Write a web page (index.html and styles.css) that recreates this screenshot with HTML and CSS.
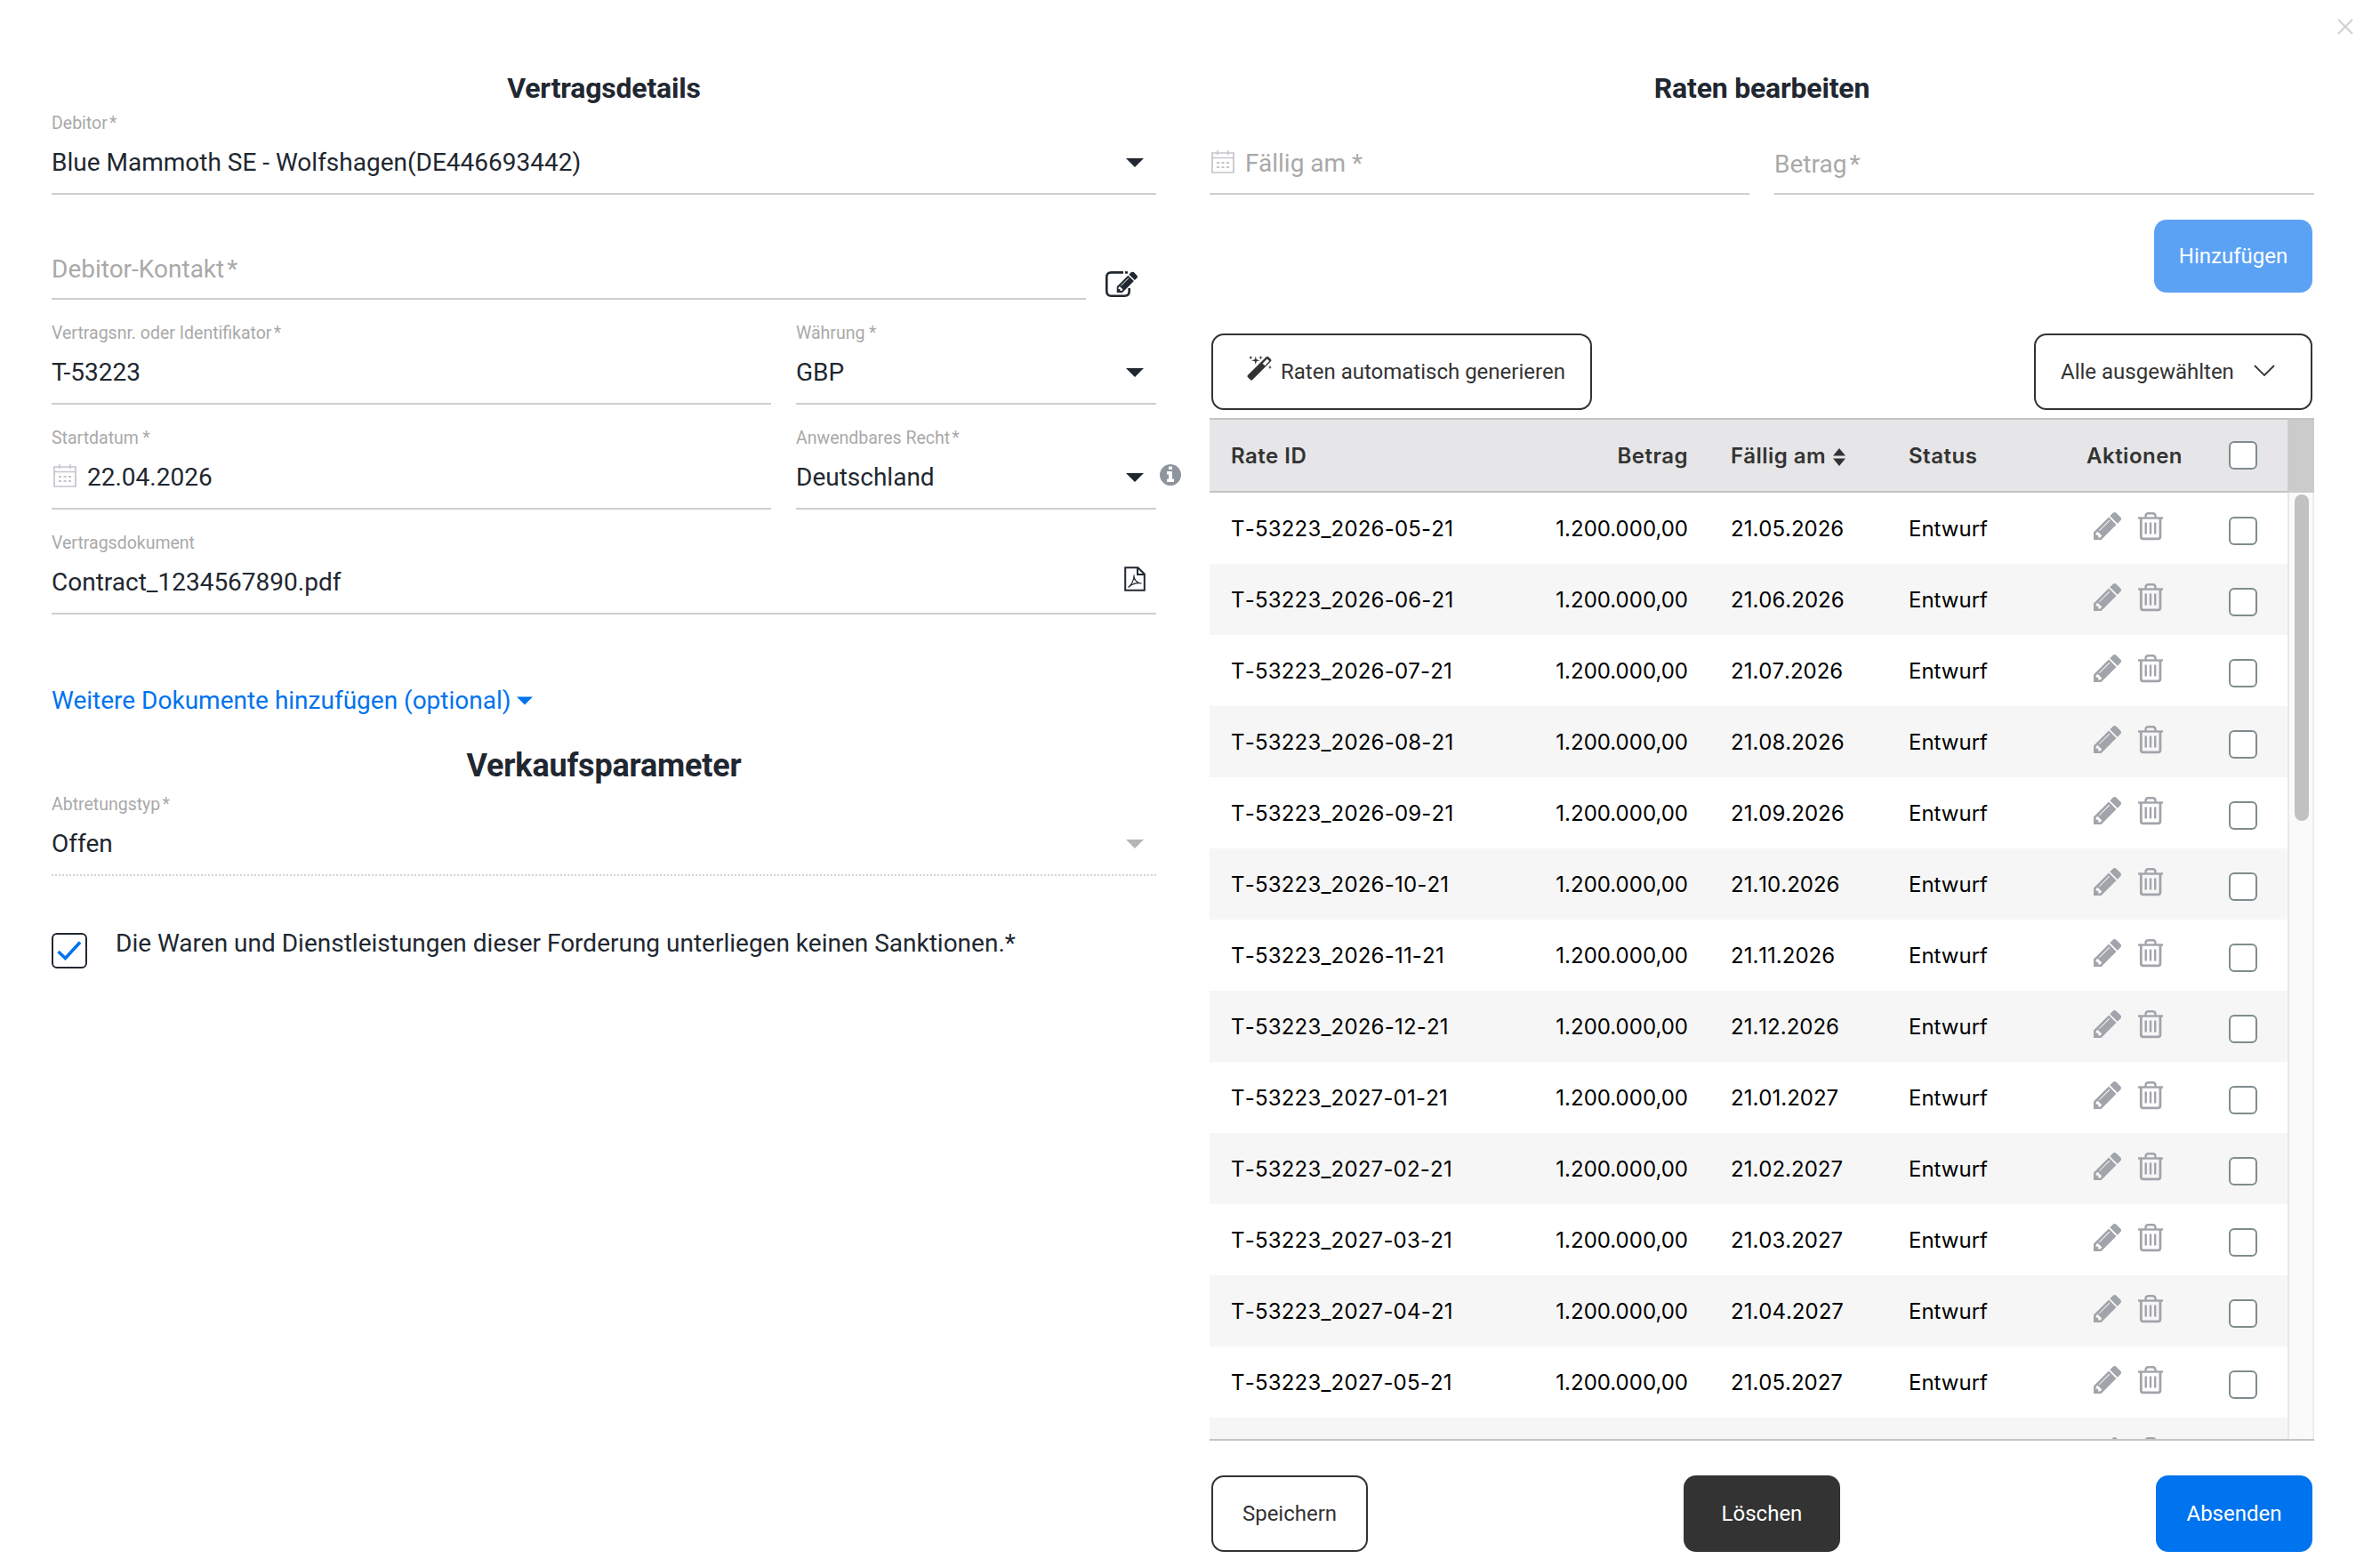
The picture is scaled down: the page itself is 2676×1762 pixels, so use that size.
FILE: index.html
```html
<!DOCTYPE html>
<html lang="de">
<head>
    <meta charset="UTF-8">
    <meta name="viewport" content="width=device-width, initial-scale=1.0">
    <title>Vertragsdetails</title>
    <link rel="stylesheet" href="styles.css">
</head>
<body>

    <!-- Shared icons -->
    <svg class="sprite" width="0" height="0">
        <symbol id="pencil" viewBox="128 149 1515 1515">
            <path d="M491 1536l91-91-235-235-91 91v107h128v128h107zM1014 608q0-22-22-22-10 0-17 7l-542 542q-7 7-7 17 0 22 22 22 10 0 17-7l542-542q7-7 7-17zM960 416l416 416-832 832h-416v-416zM1643 512q0 53-37 90l-166 166-416-416 166-165q36-38 90-38 53 0 91 38l235 234q37 39 37 91z" fill="currentColor"/>
        </symbol>
        <symbol id="trash" viewBox="0 0 28 32">
            <g fill="none" stroke="currentColor">
                <path d="M0 6.5h28" stroke-width="2.4"/>
                <path d="M8.5 6V4.5Q8.5 1.2 11.5 1.2H16.5Q19.5 1.2 19.5 4.5V6" stroke-width="2.4"/>
                <path d="M3.3 7V27.5Q3.3 29.8 5.600 29.8H22.6Q24.9 29.8 24.9 27.5V7" stroke-width="2.8"/>
                <path d="M8.7 11.5v13M14 11.5v13M19.2 11.5v13" stroke-width="2.4"/>
            </g>
        </symbol>
        <symbol id="calendar" viewBox="0 0 26 26">
            <g fill="none" stroke="currentColor">
                <path d="M1 3h24v22H1z M1 8.5h24" stroke-width="1.7"/>
                <path d="M7 0v5M19 0v5" stroke-width="1.5"/>
                <path d="M6 14h14M6 19h14" stroke-width="2" stroke-dasharray="3 2.5"/>
            </g>
        </symbol>
        <symbol id="caret" viewBox="0 0 20 10">
            <path d="M0 0h20L10 10z" fill="currentColor"/>
        </symbol>
    </svg>

    <svg class="close" viewBox="0 0 18 18"><path d="M1 1l16 16M17 1L1 17" fill="none" stroke="currentColor" stroke-width="2"/></svg>

    <div class="layout">
        <section class="column">
            <h2>Vertragsdetails</h2>

            <div class="row first">
                <div class="field">
                    <label>Debitor<i>*</i></label>
                    <div class="value"><span>Blue Mammoth SE - Wolfshagen(DE446693442)</span><svg class="caret"><use href="#caret"/></svg></div>
                </div>
            </div>

            <div class="row">
                <div class="field contact">
                    <div class="value placeholder"><span>Debitor-Kontakt<i>*</i></span></div>
                </div>
                <svg class="edit" viewBox="0 0 36 30">
                    <path d="M25 1.4H6.5Q1.3 1.4 1.3 6.600V22.5Q1.3 27.7 6.5 27.7H21.5Q26.7 27.7 26.7 22.5V19" fill="none" stroke="currentColor" stroke-width="2.6"/>
                    <path d="M20 -2L30 -2L20 12z" fill="white"/>
                    <path d="M22 1.4H25" stroke="currentColor" stroke-width="2.6"/>
                    <use href="#pencil" x="12.5" y="0.5" width="23.5" height="23.5"/>
                </svg>
            </div>

            <div class="row">
                <div class="field">
                    <label>Vertragsnr. oder Identifikator<i>*</i></label>
                    <div class="value"><span>T-53223</span></div>
                </div>
                <div class="field narrow">
                    <label>Währung<i class="wide">*</i></label>
                    <div class="value"><span>GBP</span><svg class="caret"><use href="#caret"/></svg></div>
                </div>
            </div>

            <div class="row">
                <div class="field">
                    <label>Startdatum<i class="wide">*</i></label>
                    <div class="value"><svg class="calendar"><use href="#calendar"/></svg><span>22.04.2026</span></div>
                </div>
                <div class="field narrow">
                    <label>Anwendbares Recht<i>*</i></label>
                    <div class="value"><span>Deutschland</span><svg class="caret"><use href="#caret"/></svg></div>
                </div>
                <svg class="info" viewBox="128 128 1536 1536"><path d="M1152 1376v-160q0-14-9-23t-23-9h-96v-512q0-14-9-23t-23-9h-320q-14 0-23 9t-9 23v160q0 14 9 23t23 9h96v320h-96q-14 0-23 9t-9 23v160q0 14 9 23t23 9h448q14 0 23-9t9-23zM1024 480v-160q0-14-9-23t-23-9h-192q-14 0-23 9t-9 23v160q0 14 9 23t23 9h192q14 0 23-9t9-23zM1664 896q0 209-103 385.5t-279.5 279.5-385.5 103-385.5-103-279.5-279.5-103-385.5 103-385.5 279.5-279.5 385.5-103 385.5 103 279.5 279.5 103 385.5z" fill="currentColor"/></svg>
            </div>

            <div class="row">
                <div class="field">
                    <label>Vertragsdokument</label>
                    <div class="value">
                        <span>Contract_1234567890.pdf</span>
                        <svg class="pdf" viewBox="0 0 24 28">
                            <path d="M1.2 1.2H15.5L22.8 8.5V26.8H1.2z M15 1.2V9H22.8" fill="none" stroke="currentColor" stroke-width="2"/>
                            <path d="M4.5 23.5C8 21 11.5 14.5 11 9.5C10.5 14 14 19 19.5 19C14 18 9 19.5 4.5 23.5z" fill="none" stroke="currentColor" stroke-width="1.2"/>
                        </svg>
                    </div>
                </div>
            </div>

            <a class="more" href="#">Weitere Dokumente hinzufügen (optional) <svg><use href="#caret"/></svg></a>

            <h2 class="sales">Verkaufsparameter</h2>
            <div class="field disabled">
                <label>Abtretungstyp<i>*</i></label>
                <div class="value"><span>Offen</span><svg class="caret"><use href="#caret"/></svg></div>
            </div>

            <div class="sanctions">
                <div class="checkbox checked"><svg viewBox="0 0 28 22"><path d="M1.5 12l8 7.5L26 1.5" fill="none" stroke="currentColor" stroke-width="3.6"/></svg></div>
                <span>Die Waren und Dienstleistungen dieser Forderung unterliegen keinen Sanktionen.*</span>
            </div>
        </section>

        <section class="column">
            <h2>Raten bearbeiten</h2>

            <div class="row first">
                <div class="field">
                    <div class="value placeholder due"><svg class="calendar"><use href="#calendar"/></svg><span>Fällig am *</span></div>
                </div>
                <div class="field">
                    <div class="value placeholder"><span>Betrag<i>*</i></span></div>
                </div>
            </div>

            <div class="button add">Hinzufügen</div>

            <div class="toolbar">
                <div class="button outline generate">
                    <svg viewBox="0 0 28 28">
                        <path d="M21.5 1.5Q23 0 24.5 1.5L27 4Q28 5.5 26.8 6.6L6 27.2Q5 28 4 27.2L.8 24Q0 23 .8 22zM22.8 3.6L17.6 8.7L20.3 11.2L25.2 6z" fill="currentColor" fill-rule="evenodd"/>
                        <path d="M9.8 .5L10.8 4.3L14.5 5.3L10.8 6.3L9.8 10L8.8 6.3L5 5.3L8.8 4.3zM4.3 0L4.9 1.5L6.5 2.1L4.9 2.7L4.3 4.2L3.7 2.7L2 2.1L3.7 1.5zM15.5 0L16.1 1.5L17.7 2.1L16.1 2.7L15.5 4.2L14.9 2.7L13.3 2.1L14.9 1.5zM26 10.8L26.6 12.4L28 13L26.6 13.6L26 15.2L25.4 13.6L23.9 13L25.4 12.4z" fill="currentColor"/>
                    </svg>
                    Raten automatisch generieren
                </div>
                <div class="button outline selected">
                    Alle ausgewählten
                    <svg viewBox="0 0 24 14"><path d="M1 1l11 11L23 1" fill="none" stroke="currentColor" stroke-width="1.8"/></svg>
                </div>
            </div>

            <div class="table">
                <div class="table-head">
                    <div class="cells">
                        <span>Rate ID</span>
                        <span class="right">Betrag</span>
                        <span>Fällig am<svg class="sort" viewBox="0 0 14 20"><path d="M7 0l7 8.5H0zM7 20l7-8.5H0z" fill="currentColor"/></svg></span>
                        <span>Status</span>
                        <span>Aktionen</span>
                        <span class="checkbox"></span>
                    </div>
                    <div class="corner"></div>
                </div>
                <div class="table-body">
                    <div class="rates" id="rates"></div>
                    <div class="scrollbar"><div class="thumb"></div></div>
                </div>
            </div>

            <div class="footer">
                <div class="button outline">Speichern</div>
                <div class="button dark">Löschen</div>
                <div class="button primary">Absenden</div>
            </div>
        </section>
    </div>

    <script>
        // One rate per month, starting in May 2026
        const renderRates = (count) => {
            const rates = document.getElementById('rates');

            for (let i = 0; i < count; i++) {
                const year = 2026 + Math.floor((i + 4) / 12);
                const month = String((i + 4) % 12 + 1).padStart(2, '0');
                const row = document.createElement('div');
                row.classList.add('cells', 'rate');

                row.innerHTML = `
                    <span class="rate-id">T-53223_${year}-${month}-21</span>
                    <span class="right">1.200.000,00</span>
                    <span class="date">21.${month}.${year}</span>
                    <span>Entwurf</span>
                    <span class="actions">
                        <svg class="pencil"><use href="#pencil"/></svg>
                        <svg class="trash"><use href="#trash"/></svg>
                    </span>
                    <span class="checkbox"></span>
                `;

                rates.appendChild(row);
            }
        };

        renderRates(14);
    </script>
</body>
</html>
```
FILE: styles.css
```css
* {
    box-sizing: border-box;
}

body {
    margin: 0;
    height: 1762px;
    overflow: hidden;
    background: white;
    color: #212730;
    font-family: Roboto, "Liberation Sans", sans-serif;
    font-size: 28px;
}

svg {
    display: block;
    flex: none;
}

i {
    font-style: normal;
    margin-left: 0.11em;
}

i.wide {
    margin-left: 0.23em;
}

.sprite {
    position: absolute;
}

.close {
    position: absolute;
    top: 21px;
    right: 30px;
    width: 18px;
    height: 18px;
    color: #cfcfcf;
}

/* Two equal columns */
.layout {
    display: flex;
    gap: 60px;
    padding: 80px 74px 0 58px;
}

.column {
    width: 1242px;
}

h2 {
    margin: 0;
    height: 45px;
    font-size: 32px;
    font-weight: 700;
    line-height: 39px;
    letter-spacing: -0.2px;
    text-align: center;
}

h2.sales {
    margin-top: 34px;
    height: 51px;
    font-size: 36px;
    line-height: 43px;
}

/* Form fields */
.row {
    display: flex;
    gap: 28px;
    margin-top: 24px;
}

.row.first {
    margin-top: 0;
}

.field {
    display: flex;
    flex: 1;
    flex-direction: column;
    justify-content: flex-end;
    height: 94px;
    border-bottom: 2px solid #cfcfcf;
}

.narrow {
    flex: none;
    width: 405px;
}

.contact {
    flex: none;
    width: 1163px;
}

.field label {
    margin-bottom: 12px;
    color: #a9a9a9;
    font-size: 19.5px;
    line-height: 24px;
}

.value {
    display: flex;
    align-items: center;
    height: 54px;
    padding-bottom: 14px;
    line-height: 40px;
}

.placeholder {
    padding-bottom: 11px;
    color: #a9a9a9;
}

.due {
    padding-bottom: 13px;
}

.caret {
    width: 20px;
    height: 10px;
    margin: 0 14px 1px auto;
}

.calendar {
    width: 26px;
    height: 26px;
    margin: 0 12px 4px 2px;
    color: #c3c5cb;
}

.edit {
    width: 36px;
    height: 30px;
    margin: 62px 0 0 -6px;
}

.info {
    width: 24px;
    height: 24px;
    margin: 43px -28px 0 -24px;
    color: #8e959d;
}

.pdf {
    width: 24px;
    height: 28px;
    margin: 0 12px 8px auto;
}

.disabled {
    border-bottom: 2px dotted #d4d4d4;
}

.disabled .caret {
    color: #b5b5b5;
}

.more {
    display: flex;
    align-items: center;
    gap: 6px;
    margin: 77px 0 -2px;
    color: #0073ee;
    line-height: 40px;
    text-decoration: none;
}

.more svg {
    width: 18px;
    height: 10px;
}

.sanctions {
    display: flex;
    gap: 32px;
    margin-top: 56px;
    line-height: 40px;
}

/* Checkboxes */
.checkbox {
    width: 32px;
    height: 32px;
    border: 2px solid #7f8c8d;
    border-radius: 6px;
    background: white;
}

.checked {
    display: flex;
    align-items: center;
    justify-content: center;
    width: 40px;
    height: 40px;
    margin-top: 8px;
    border-color: #212730;
    color: #0073ee;
}

.checked svg {
    width: 28px;
    height: 22px;
}

/* Buttons */
.button {
    display: flex;
    align-items: center;
    justify-content: center;
    width: 176px;
    height: 86px;
    border-radius: 14px;
    color: white;
    font-size: 24px;
}

.outline {
    border: 2px solid #333;
    color: #333;
}

.dark {
    background: #333;
}

.primary {
    background: #0073ee;
}

.add {
    width: 178px;
    height: 82px;
    margin: 28px 2px 0 auto;
    background: #5ba2f5;
}

.toolbar {
    display: flex;
    justify-content: space-between;
    margin: 46px 2px 9px;
}

.generate {
    justify-content: flex-start;
    gap: 10px;
    width: 428px;
    padding-left: 38px;
}

.generate svg {
    width: 28px;
    height: 28px;
    margin-bottom: 8px;
}

.selected {
    justify-content: flex-start;
    gap: 22px;
    width: 313px;
    padding-left: 28px;
}

.selected svg {
    width: 24px;
    height: 14px;
    margin-bottom: 3px;
}

/* Rates table */
.table {
    height: 1150px;
    border-top: 2px solid #c4c4c4;
    border-bottom: 2px solid #c4c4c4;
    font-family: Inter, "Liberation Sans", sans-serif;
    font-size: 24px;
}

.table-head {
    display: flex;
    height: 82px;
    color: #333;
    font-weight: 600;
    letter-spacing: 0.5px;
}

.table-head .cells {
    height: 82px;
    border-bottom: 2px solid #c4c4c4;
    background: #e6e6e8;
}

.table-head .checkbox {
    margin: 0 0 0 34px;
}

.corner {
    width: 30px;
    background: #cbcbcb;
}

.cells {
    display: grid;
    grid-template-columns: 312px 250px 200px 200px 150px 100px;
    align-items: center;
    width: 1212px;
    height: 80px;
}

.cells > span:not(.checkbox) {
    padding: 0 24px;
    white-space: nowrap;
}

.cells .right {
    text-align: right;
}

.sort {
    display: inline-block;
    width: 14px;
    height: 20px;
    margin-left: 8px;
    vertical-align: -3px;
}

.table-body {
    display: flex;
    height: 1064px;
    overflow: hidden;
}

.rate {
    color: black;
}

.rate:nth-child(even) {
    background: #f6f6f6;
}

.rate-id,
.date {
    font-kerning: none;
}

.rate-id {
    letter-spacing: 0.2px;
}

.rate .checkbox {
    margin: 6px 0 0 34px;
}

.rate .actions {
    display: flex;
    gap: 19px;
    padding: 0 0 4px 32px !important;
    color: #a1a4aa;
}

.pencil {
    width: 31px;
    height: 31px;
}

.trash {
    width: 28px;
    height: 32px;
}

.scrollbar {
    width: 30px;
    height: 1064px;
    padding: 2px 0 0 6px;
    border-left: 2px solid #e8e8e8;
    border-right: 2px solid #ededed;
    background: #fafafa;
}

.thumb {
    width: 16px;
    height: 367px;
    border-radius: 8px;
    background: #c1c1c1;
}

.footer {
    display: flex;
    justify-content: space-between;
    margin: 39px 2px 0;
}
```
